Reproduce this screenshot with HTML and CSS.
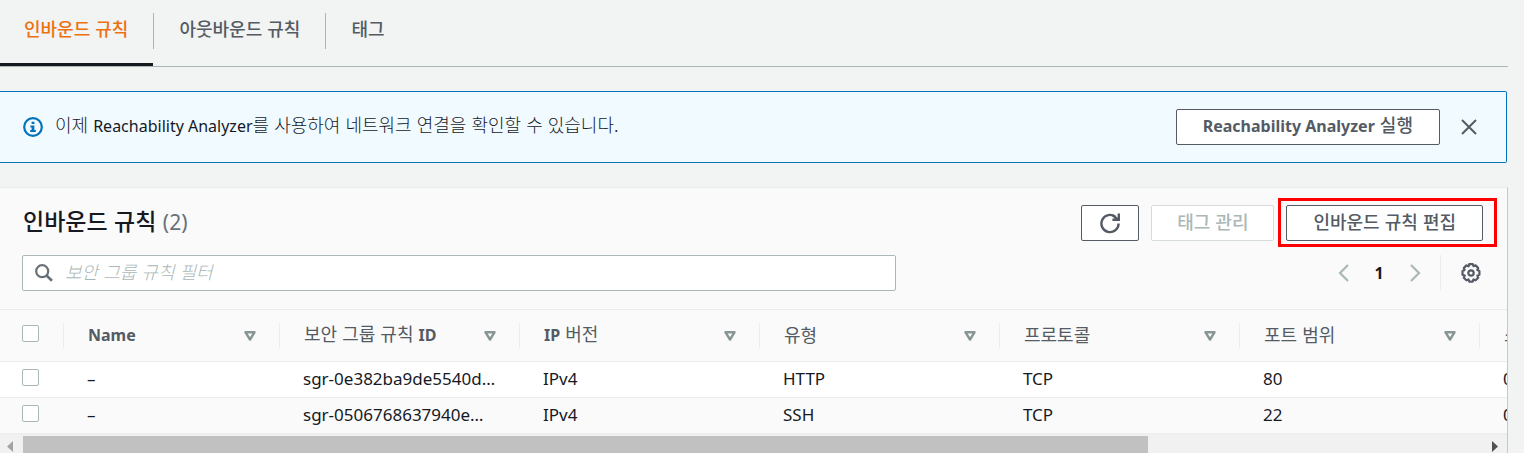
FILE: index.html
```html
<!DOCTYPE html>
<html lang="ko">
<head>
<meta charset="utf-8">
<title>인바운드 규칙</title>
<link rel="stylesheet" href="styles.css">
</head>
<body>
<main class="page">
  <nav class="tabs">
    <a class="tab tab-active" href="#inbound" aria-current="page"><span class="tab-label">인바운드 규칙</span></a>
    <a class="tab" href="#outbound"><span class="tab-label">아웃바운드 규칙</span></a>
    <a class="tab" href="#tags"><span class="tab-label">태그</span></a>
  </nav>

  <section class="banner">
    <svg class="icon-info" viewBox="0 0 20 20" aria-hidden="true">
      <circle cx="10" cy="10" r="8.8" fill="none" stroke="#0073bb" stroke-width="2.2"/>
      <path d="M8.6 4.7h2.8v2.4H8.6zM7.4 8.4h4v4.6h1.4v2H7.2v-2h1.4v-2.6H7.4z" fill="#0073bb"/>
    </svg>
    <p class="banner-text">이제 <span class="latin">Reachability Analyzer</span>를 사용하여 네트워크 연결을 확인할 수 있습니다.</p>
    <button class="button" type="button"><span class="latin">Reachability Analyzer</span> 실행</button>
    <button class="icon-button banner-close" type="button" aria-label="닫기">
      <svg class="icon-close" viewBox="0 0 16 16" aria-hidden="true"><path d="M1 1l14 14M15 1L1 15" fill="none" stroke="#545b64" stroke-width="2"/></svg>
    </button>
  </section>

  <section class="panel">
    <header class="panel-header">
      <h2 class="panel-title">인바운드 규칙 <span class="count">(2)</span></h2>
      <div class="actions">
        <button class="button button-refresh" type="button" aria-label="새로 고침">
          <svg class="icon-refresh" viewBox="0 0 22 22" aria-hidden="true"><path d="M19.6 11.500A8.600 8.600 0 1 1 16.500 4.900" fill="none" stroke="#545b64" stroke-width="2.4"/><path d="M18.600 1.500H21v7.400h-7.600V6.600h2.400l-2.600-2.200 1.500-1.800 3.900 3.100z" fill="#545b64"/></svg>
        </button>
        <button class="button" type="button" disabled>태그 관리</button>
        <div class="highlight"><button class="button" type="button">인바운드 규칙 편집</button></div>
      </div>
    </header>

    <div class="toolbar">
      <label class="search">
        <svg class="icon-search" viewBox="0 0 18 18" aria-hidden="true"><circle cx="7.2" cy="7.2" r="6" fill="none" stroke="#687078" stroke-width="2.2"/><path d="M11.5 11.5l5.5 5.3" stroke="#687078" stroke-width="2.6"/></svg>
        <input class="search-input" type="text" placeholder="보안 그룹 규칙 필터" aria-label="보안 그룹 규칙 필터">
      </label>
      <div class="pager">
        <button class="icon-button" type="button" aria-label="이전 페이지"><svg class="icon-chevron" viewBox="0 0 11 18" aria-hidden="true"><path d="M10 1L2 9l8 8" fill="none" stroke="#aab7b8" stroke-width="2.2"/></svg></button>
        <button class="icon-button page-number" type="button">1</button>
        <button class="icon-button" type="button" aria-label="다음 페이지"><svg class="icon-chevron" viewBox="0 0 11 18" aria-hidden="true"><path d="M1 1l8 8-8 8" fill="none" stroke="#aab7b8" stroke-width="2.2"/></svg></button>
        <div class="settings">
          <button class="icon-button" type="button" aria-label="설정">
            <svg class="icon-gear" viewBox="0 0 20 20" aria-hidden="true"><path d="M8.2 1.2h3.6l.7 2 2.1-.8 2.6 2.6-.9 2 2.1.9v3.9l-2 .8.8 2.1-2.6 2.6-2.1-.9-.8 2.2H8.3l-.8-2.200-2.100.9-2.600-2.600.9-2.100-2.200-.8V7.900l2.100-.9-.8-2 2.600-2.600 2.100.9z" fill="none" stroke="#545b64" stroke-width="2.2" stroke-linejoin="round"/><circle cx="10" cy="10" r="2.7" fill="none" stroke="#545b64" stroke-width="2.2"/></svg>
          </button>
        </div>
      </div>
    </div>

    <div class="table-scroll">
      <table class="rules">
        <colgroup><col class="col-check"><col class="col-name"><col><col><col><col><col><col></colgroup>
        <thead>
          <tr>
            <th><input class="check" type="checkbox" aria-label="모두 선택"></th>
            <th><div class="head"><span class="head-label"><span class="latin">Name</span></span><svg class="icon-sort" viewBox="0 0 12 10" aria-hidden="true"><path d="M1.5 1.300h9L6 8.500z" fill="none" stroke="#879596" stroke-width="2.4" stroke-linejoin="round"/></svg></div></th>
            <th><div class="head"><span class="head-label">보안 그룹 규칙 <span class="latin">ID</span></span><svg class="icon-sort" viewBox="0 0 12 10" aria-hidden="true"><path d="M1.5 1.300h9L6 8.500z" fill="none" stroke="#879596" stroke-width="2.4" stroke-linejoin="round"/></svg></div></th>
            <th><div class="head"><span class="head-label"><span class="latin">IP</span> 버전</span><svg class="icon-sort" viewBox="0 0 12 10" aria-hidden="true"><path d="M1.5 1.300h9L6 8.500z" fill="none" stroke="#879596" stroke-width="2.4" stroke-linejoin="round"/></svg></div></th>
            <th><div class="head"><span class="head-label">유형</span><svg class="icon-sort" viewBox="0 0 12 10" aria-hidden="true"><path d="M1.5 1.300h9L6 8.500z" fill="none" stroke="#879596" stroke-width="2.4" stroke-linejoin="round"/></svg></div></th>
            <th><div class="head"><span class="head-label">프로토콜</span><svg class="icon-sort" viewBox="0 0 12 10" aria-hidden="true"><path d="M1.5 1.300h9L6 8.500z" fill="none" stroke="#879596" stroke-width="2.4" stroke-linejoin="round"/></svg></div></th>
            <th><div class="head"><span class="head-label">포트 범위</span><svg class="icon-sort" viewBox="0 0 12 10" aria-hidden="true"><path d="M1.5 1.300h9L6 8.500z" fill="none" stroke="#879596" stroke-width="2.4" stroke-linejoin="round"/></svg></div></th>
            <th><div class="head"><span class="head-label">소스</span></div></th>
          </tr>
        </thead>
        <tbody>
          <tr>
            <td><input class="check" type="checkbox" aria-label="sgr-0e382ba9de5540d 선택"></td>
            <td>–</td><td>sgr-0e382ba9de5540d…</td><td>IPv4</td><td>HTTP</td><td>TCP</td><td>80</td><td>0.0.0.0/0</td>
          </tr>
          <tr>
            <td><input class="check" type="checkbox" aria-label="sgr-0506768637940e 선택"></td>
            <td>–</td><td>sgr-0506768637940e…</td><td>IPv4</td><td>SSH</td><td>TCP</td><td>22</td><td>0.0.0.0/0</td>
          </tr>
        </tbody>
      </table>
    </div>
    <div class="scrollbar" aria-hidden="true">
      <svg class="arrow" viewBox="0 0 23 17"><path d="M13 5v11L7 10.500z" fill="#a3a3a3"/></svg>
      <div class="track"><div class="thumb"></div></div>
      <svg class="arrow" viewBox="0 0 23 17"><path d="M8 5v11l6-5.500z" fill="#505050"/></svg>
    </div>
  </section>
</main>
</body>
</html>
```

FILE: styles.css
```css
* { box-sizing: border-box; }

body {
  margin: 0;
  background: #f2f3f3;
  color: #16191f;
  font-family: "Noto Sans CJK KR", "Noto Sans", sans-serif;
  font-size: 18px;
  line-height: 24px;
}

.page { margin-right: 16px; }

.latin {
  font-family: "Noto Sans", sans-serif;
  font-size: 16px;
}

.tabs {
  display: flex;
  padding-top: 13px;
  border-bottom: 1px solid #aab7b8;
}

.tab {
  padding-bottom: 14px;
  border-bottom: 3px solid transparent;
  color: #545b64;
  font-weight: 500;
  text-decoration: none;
}

.tab-label {
  display: block;
  padding: 3px 25px 9px;
  border-left: 1px solid #aab7b8;
}

.tab-active { border-bottom-color: #16191f; color: #ec7211; }
.tab-active .tab-label { padding-left: 24px; border-left: 0; }

.banner {
  display: flex;
  align-items: center;
  margin: 24px 1px 24px 0;
  padding: 17px 23px;
  border: 1px solid #0073bb;
  border-left: 0;
  border-radius: 0 2px 2px 0;
  background: #f1faff;
}

.icon-info { width: 20px; height: 20px; margin-right: 12px; flex: none; }
.banner-text { flex: 1; margin: 0; padding-bottom: 4px; font-weight: 300; }
.banner-text .latin { font-weight: 400; }

.button {
  height: 36px;
  padding: 0 26px 4px;
  border: 1px solid #545b64;
  border-radius: 2px;
  background: #fff;
  color: #545b64;
  font: inherit;
  font-weight: 500;
  white-space: nowrap;
}

.button .latin { font-weight: 700; }
.button:disabled { padding: 0 25px 4px; border-color: #d5dbdb; color: #aab7b8; }

.icon-button {
  display: flex;
  align-items: center;
  justify-content: center;
  min-width: 28px;
  height: 36px;
  padding: 0;
  border: 0;
  background: none;
}

.banner-close { margin-left: 15px; }
.icon-close { width: 16px; height: 16px; }

.panel {
  border-top: 1px solid #eaeded;
  border-right: 1px solid #c3c9c9;
  background: #fafafa;
}

.panel-header {
  display: flex;
  align-items: center;
  justify-content: space-between;
  padding: 16px 24px 13px 23px;
}

.panel-title { margin: 0; padding-bottom: 4px; font-size: 23px; font-weight: 500; line-height: 32px; }
.count { color: #687078; font-family: "Noto Sans", sans-serif; font-size: 21px; font-weight: 400; }
.actions { display: flex; gap: 12px; height: 36px; }
.button-refresh { display: flex; align-items: center; justify-content: center; width: 58px; padding: 0; }
.icon-refresh { width: 22px; height: 22px; }

/* Red callout frame around the edit button */
.highlight { display: flex; position: relative; }
.highlight::after {
  content: "";
  position: absolute;
  inset: -7px -14px -6px -8px;
  border: 3px solid #f00;
  pointer-events: none;
}

.toolbar {
  display: flex;
  align-items: center;
  justify-content: space-between;
  padding: 0 22px 18px;
}

.search {
  display: flex;
  align-items: center;
  gap: 12px;
  width: 60%;
  max-width: 874px;
  height: 36px;
  padding: 0 12px;
  border: 1px solid #aab7b8;
  border-radius: 2px;
  background: #fff;
}

.icon-search { width: 18px; height: 18px; flex: none; }
.search-input { flex: 1; min-width: 0; padding: 0 0 4px; border: 0; outline: 0; background: none; font: inherit; font-weight: 300; }
.search-input::placeholder { color: #aab7b8; font-style: italic; opacity: 1; }

.pager { display: flex; align-items: center; gap: 8px; }
.page-number { color: #16191f; font-family: "Noto Sans", sans-serif; font-size: 16px; font-weight: 700; }
.icon-chevron { width: 11px; height: 18px; }
.settings { margin-left: 3px; padding-left: 16px; border-left: 1px solid #eaeded; }
.icon-gear { width: 20px; height: 20px; }

.table-scroll { overflow-x: auto; scrollbar-width: none; border-top: 1px solid #eaeded; }

.rules {
  width: 1719px;
  table-layout: fixed;
  border-collapse: separate;
  border-spacing: 0;
}

.col-check { width: 63px; }
.col-name { width: 216px; }

.rules th { height: 52px; padding: 0; border-bottom: 1px solid #eaeded; color: #545b64; font-weight: 400; text-align: left; }
.rules th .latin { font-weight: 700; }
.head {
  display: flex;
  align-items: center;
  justify-content: space-between;
  padding: 0 23px 0 25px;
}
.head-label { padding-bottom: 4px; }
.rules th + th { background: linear-gradient(#eaeded, #eaeded) 0 13px / 1px 25px no-repeat; }
.icon-sort { width: 12px; height: 10px; }

.rules td {
  height: 36px;
  padding: 0 24px 2px;
  border-bottom: 1px solid #eaeded;
  font-family: "Noto Sans", sans-serif;
  font-size: 17px;
  white-space: nowrap;
}

.rules tbody tr:first-child { background: #fff; }
.rules th:first-child, .rules td:first-child { padding: 0 0 4px 22px; }

.check {
  display: block;
  width: 17px;
  height: 17px;
  margin: 0;
  appearance: none;
  border: 1px solid #aab7b8;
  border-radius: 2px;
  background: #fff;
}

.scrollbar { display: flex; padding-top: 2px; background: #f1f1f1; }
.arrow { width: 23px; height: 17px; flex: none; }
.track { flex: 1; }
.thumb { width: 77%; height: 17px; background: #c1c1c1; }
```
